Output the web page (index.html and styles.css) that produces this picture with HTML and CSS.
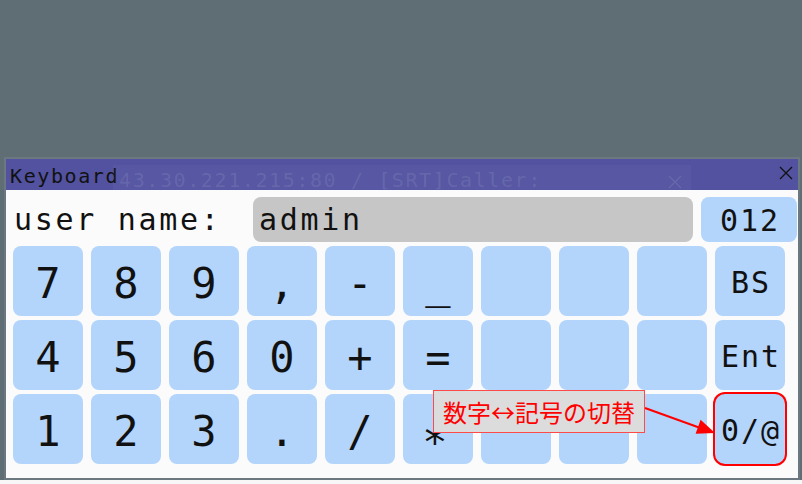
FILE: index.html
```html
<!DOCTYPE html>
<html lang="ja">
<head>
<meta charset="utf-8">
<title>Keyboard</title>
<link rel="stylesheet" href="styles.css">
</head>
<body>
<div class="desk">
  <div class="window">
    <div class="titlebar">
      <span class="title">Keyboard</span>
      <div class="ghost-bar">
        <span class="ghost-text">43.30.221.215:80 / [SRT]Caller:</span>
        <svg class="ghost-x" width="14" height="14" viewBox="0 0 14 14"><path d="M1 1L13 13M13 1L1 13" stroke="currentColor" stroke-width="1.2" fill="none"/></svg>
      </div>
      <svg class="close" width="14" height="14" viewBox="0 0 14 14"><path d="M1 1L13 13M13 1L1 13" stroke="#111" stroke-width="1.3" fill="none"/></svg>
    </div>
    <div class="content">
      <div class="input-row">
        <span class="label">user name:</span>
        <div class="field">admin</div>
        <div class="key small mode">012</div>
      </div>
      <div class="keys">
        <div class="key">7</div><div class="key">8</div><div class="key">9</div><div class="key">,</div><div class="key">-</div><div class="key">_</div><div class="key"></div><div class="key"></div><div class="key"></div><div class="key small">BS</div>
        <div class="key">4</div><div class="key">5</div><div class="key">6</div><div class="key">0</div><div class="key">+</div><div class="key">=</div><div class="key"></div><div class="key"></div><div class="key"></div><div class="key small">Ent</div>
        <div class="key">1</div><div class="key">2</div><div class="key">3</div><div class="key">.</div><div class="key">/</div><div class="key star">*</div><div class="key"></div><div class="key"></div><div class="key"></div><div class="key small hl">0/@</div>
      </div>
    </div>
  </div>
</div>
<div class="overlay">
  <svg class="arrow" width="802" height="484" viewBox="0 0 802 484">
    <line x1="645" y1="408" x2="699" y2="427.5" stroke="#ff0000" stroke-width="2"/>
    <polygon points="715,433 695.6,433.8 700.6,419.8" fill="#ff0000"/>
  </svg>
  <div class="callout">数字↔記号の切替</div>
</div>
</body>
</html>
```
FILE: styles.css
```css
html, body {
  margin: 0;
  padding: 0;
}
body {
  width: 802px;
  height: 484px;
  background: #f7f7f7;
  position: relative;
  overflow: hidden;
  font-family: "DejaVu Sans Mono", monospace;
}
.desk {
  height: 480px;
  background: #5f6e75;
  padding-top: 157px;
  box-sizing: border-box;
}
.window {
  margin-left: 4px;
  width: 796px;
  height: 323px;
  box-sizing: border-box;
  border: 2px solid #6b7880;
  background: #fbfbfb;
  display: flex;
  flex-direction: column;
}
.titlebar {
  height: 31px;
  background: #5252a0;
  position: relative;
  display: flex;
  align-items: center;
  padding-left: 4px;
}
.title {
  font-size: 20px;
  letter-spacing: 1.6px;
  color: #111;
  padding-top: 2px;
}
.ghost-bar {
  position: absolute;
  left: 107px;
  top: 6px;
  width: 578px;
  height: 25px;
  background: rgba(255, 255, 255, 0.03);
  color: rgba(255, 255, 255, 0.1);
}
.ghost-text {
  position: absolute;
  left: 6px;
  top: 5px;
  font-size: 20px;
  line-height: 20px;
  letter-spacing: 1.6px;
  white-space: nowrap;
}
.ghost-x {
  position: absolute;
  left: 555px;
  top: 10px;
}
.close {
  position: absolute;
  right: 5px;
  top: 7px;
}
.content {
  flex: 1;
  padding: 7px 0 0 7px;
  display: flex;
  flex-direction: column;
  gap: 4px;
}
.input-row {
  height: 45px;
  display: flex;
  align-items: center;
}
.label {
  width: 239px;
  font-size: 30px;
  letter-spacing: 2.7px;
  color: #111;
  padding-left: 1px;
}
.field {
  width: 440px;
  height: 45px;
  box-sizing: border-box;
  background: #c6c6c6;
  border-radius: 8px;
  display: flex;
  align-items: center;
  padding-left: 6px;
  font-size: 30px;
  letter-spacing: 2.7px;
  color: #111;
}
.key.mode {
  width: 96px;
  height: 45px;
  margin-left: 8px;
}
.keys {
  display: grid;
  grid-template-columns: repeat(10, 70px);
  grid-auto-rows: 70px;
  column-gap: 8px;
  row-gap: 4px;
}
.key {
  background: #b3d4fb;
  border-radius: 8px;
  display: flex;
  align-items: center;
  justify-content: center;
  font-size: 42px;
  color: #111;
  padding-top: 5px;
  box-sizing: border-box;
}
.key.star {
  padding-top: 26px;
  padding-right: 6px;
}
.key.small {
  font-size: 30px;
  letter-spacing: 2px;
  padding-left: 2px;
  padding-top: 2px;
}
.key.hl {
  box-shadow: 0 0 0 2px #ff0000;
  border-radius: 10px;
}
.overlay {
  position: absolute;
  left: 0;
  top: 0;
  width: 802px;
  height: 484px;
  pointer-events: none;
}
.arrow {
  position: absolute;
  left: 0;
  top: 0;
}
.callout {
  position: absolute;
  left: 433px;
  top: 390px;
  width: 212px;
  height: 43px;
  box-sizing: border-box;
  background: #dcdcdc;
  border: 1px solid #ff4a4a;
  color: #ff0000;
  font-family: "Noto Sans CJK JP", "Noto Sans", sans-serif;
  font-size: 24px;
  display: flex;
  align-items: center;
  justify-content: center;
  white-space: nowrap;
}
```
